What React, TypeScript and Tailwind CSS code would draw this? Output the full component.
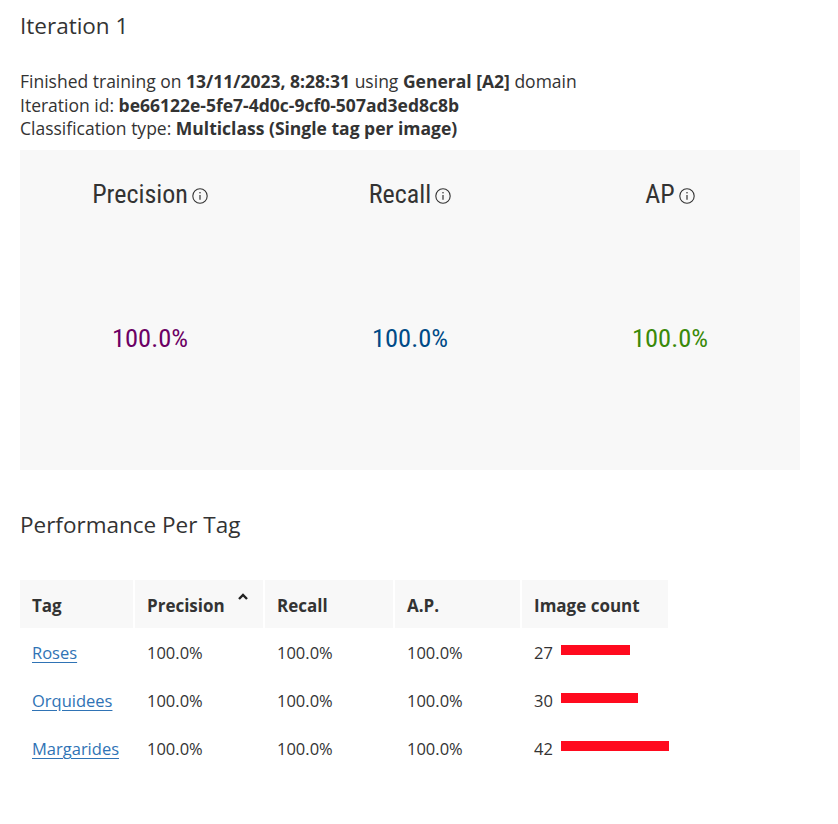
import React from "react";

const InfoIcon = () => (
  <svg width="16" height="16" viewBox="0 0 16 16" className="ml-[4px] mt-[5px]">
    <circle cx="8" cy="8" r="7.2" fill="none" stroke="#333" strokeWidth="1.1" />
    <line x1="8" y1="7" x2="8" y2="11.8" stroke="#333" strokeWidth="1.2" />
    <circle cx="8" cy="4.8" r="0.8" fill="#333" />
  </svg>
);

const metrics = [
  { label: "Precision", value: "100.0%", color: "text-[#6c0064]" },
  { label: "Recall", value: "100.0%", color: "text-[#004b87]" },
  { label: "AP", value: "100.0%", color: "text-[#3a8a0a]" },
];

const rows = [
  { tag: "Roses", count: 27 },
  { tag: "Orquidees", count: 30 },
  { tag: "Margarides", count: 42 },
];

const condensed = { fontFamily: '"Liberation Sans Narrow", "Roboto Condensed", "Open Sans", sans-serif' };

export default function App() {
  return (
    <div
      className="w-[838px] h-[824px] bg-white text-[#333] px-5 pt-[10px]"
      style={{ fontFamily: '"Open Sans", "Noto Sans", sans-serif' }}
    >
      <h1 className="text-[22.5px] leading-[32px] font-normal">Iteration 1</h1>
      <div className="mt-[28px] text-[17.5px] leading-[23.5px]">
        <div>
          Finished training on <b>13/11/2023, 8:28:31</b> using <b>General [A2]</b> domain
        </div>
        <div>
          Iteration id: <b>be66122e-5fe7-4d0c-9cf0-507ad3ed8c8b</b>
        </div>
        <div>
          Classification type: <b>Multiclass (Single tag per image)</b>
        </div>
      </div>
      <div className="mt-[9px] h-[320px] w-[780px] bg-[#f8f8f8] grid grid-cols-3">
        {metrics.map((m) => (
          <div key={m.label} className="flex flex-col items-center pt-[29px]">
            <div className="flex items-center text-[26px] leading-[30px] text-[#333]" style={condensed}>
              {m.label}
              <InfoIcon />
            </div>
            <div className={`mt-[114px] text-[26.5px] leading-[30px] ${m.color}`} style={condensed}>
              {m.value}
            </div>
          </div>
        ))}
      </div>
      <h2 className="mt-[39px] text-[22.5px] leading-[32px] font-normal">Performance Per Tag</h2>
      <div className="mt-[39px] grid grid-cols-[113px_128px_128px_125px_146px] gap-x-[2px] text-[16.5px]">
        <div className="h-12 bg-[#f8f8f8] px-3 pt-[4px] flex items-center font-bold text-[17px]">Tag</div>
        <div className="h-12 bg-[#f8f8f8] px-3 pt-[4px] flex items-center font-bold text-[17px] justify-between">
          <span>Precision</span>
          <svg width="12" height="12" viewBox="0 0 12 12" className="mb-[18px] mr-[2px]">
            <path d="M2 8 L6 4 L10 8" fill="none" stroke="#222" strokeWidth="2.4" />
          </svg>
        </div>
        <div className="h-12 bg-[#f8f8f8] px-3 pt-[4px] flex items-center font-bold text-[17px]">Recall</div>
        <div className="h-12 bg-[#f8f8f8] px-3 pt-[4px] flex items-center font-bold text-[17px]">A.P.</div>
        <div className="h-12 bg-[#f8f8f8] px-3 pt-[4px] flex items-center font-bold text-[17px]">Image count</div>
        {rows.map((r, i) => (
          <React.Fragment key={r.tag}>
            <div className={`h-12 px-3 flex items-center ${i === 0 ? "mt-[2px]" : ""}`}>
              <a href="#" className="text-[#2f73b5] underline underline-offset-[3px]">
                {r.tag}
              </a>
            </div>
            <div className={`h-12 px-3 flex items-center ${i === 0 ? "mt-[2px]" : ""}`}>100.0%</div>
            <div className={`h-12 px-3 flex items-center ${i === 0 ? "mt-[2px]" : ""}`}>100.0%</div>
            <div className={`h-12 px-3 flex items-center ${i === 0 ? "mt-[2px]" : ""}`}>100.0%</div>
            <div className={`h-12 px-3 flex items-center ${i === 0 ? "mt-[2px]" : ""}`}>
              <span className="w-[27px] shrink-0">{r.count}</span>
              <span
                className="h-[10px] shrink-0 bg-[#ff0a1e] mb-[8px]"
                style={{ width: `${Math.round((r.count * 108) / 42)}px` }}
              />
            </div>
          </React.Fragment>
        ))}
      </div>
    </div>
  );
}
